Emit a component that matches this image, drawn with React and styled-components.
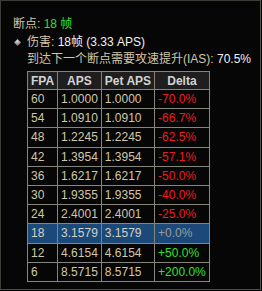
import React from "react";
import styled, { createGlobalStyle } from "styled-components";

const colors = {
  beige: "#d2c6a6",
  white: "#f0f0f0",
  green: "#2ee02e",
  red: "#ee1c1c",
  gray: "#9a9a9a",
  line: "#86857c",
};

const rows = [
  [60, "1.0000", "1.0000", "-70.0%"],
  [54, "1.0910", "1.0910", "-66.7%"],
  [48, "1.2245", "1.2245", "-62.5%"],
  [42, "1.3954", "1.3954", "-57.1%"],
  [36, "1.6217", "1.6217", "-50.0%"],
  [30, "1.9355", "1.9355", "-40.0%"],
  [24, "2.4001", "2.4001", "-25.0%"],
  [18, "3.1579", "3.1579", "+0.0%"],
  [12, "4.6154", "4.6154", "+50.0%"],
  [6, "8.5715", "8.5715", "+200.0%"],
];

const deltaColor = (d) =>
  d.startsWith("-") ? colors.red : d === "+0.0%" ? colors.gray : colors.green;

const App = () => {
  return (
    <>
      <GlobalStyle />
      <Panel>
        <Title>
          断点: <Green>18 帧</Green>
        </Title>
        <Details>
          <Marker />
          <Line>
            伤害: <White>18帧 (3.33 APS)</White>
          </Line>
          <Line>
            到达下一个断点需要攻速提升(IAS): <White>70.5%</White>
          </Line>
          <Table>
            <thead>
              <tr>
                <Th>FPA</Th>
                <Th>APS</Th>
                <Th>Pet APS</Th>
                <Th>Delta</Th>
              </tr>
            </thead>
            <tbody>
              {rows.map(([fpa, aps, pet, delta]) => (
                <Row key={fpa} active={fpa === 18}>
                  <Td>{fpa}</Td>
                  <Td>{aps}</Td>
                  <Td>{pet}</Td>
                  <Td color={deltaColor(delta)}>{delta}</Td>
                </Row>
              ))}
            </tbody>
          </Table>
        </Details>
      </Panel>
    </>
  );
};

export default App;

const GlobalStyle = createGlobalStyle`
  body {
    margin: 0;
    background: #000;
    font-family: "Liberation Sans", "Noto Sans CJK SC", sans-serif;
    font-size: 12px;
  }
`;

const Panel = styled.div`
  box-sizing: border-box;
  width: 261px;
  height: 290px;
  padding: 14px 0 0 12px;
  background: #060606;
  border: 1px solid #3e3d38;
  border-right-color: #55544c;
  border-bottom-color: #4c4b44;
  color: ${colors.beige};
`;

const Title = styled.div`
  line-height: 18px;
  margin-bottom: 1px;
`;

const Green = styled.span`
  color: ${colors.green};
`;

const White = styled.span`
  color: ${colors.white};
`;

const Details = styled.div`
  display: grid;
  grid-template-columns: 14px auto;
  justify-content: start;
  justify-items: start;
`;

const Marker = styled.span`
  width: 5px;
  height: 5px;
  margin: 6px 0 0 2px;
  transform: rotate(45deg);
  background: radial-gradient(circle at 30% 30%, #d8d8d8, #6a6a6a);
`;

const Line = styled.div`
  grid-column: 2;
  line-height: 17px;
  white-space: nowrap;
`;

const Table = styled.table`
  grid-column: 2;
  justify-self: start;
  margin-top: 3px;
  border-collapse: collapse;
  border: 1px solid ${colors.line};
`;

const Th = styled.th`
  height: 17px;
  padding: 0 3px;
  border: 1px solid ${colors.line};
  background: #1e1e1e;
  color: #d4d4d4;
  font-weight: bold;
  text-align: center;
`;

const Row = styled.tr`
  background: ${(props) => (props.active ? "#1b4a7a" : "transparent")};
  color: ${(props) => (props.active ? "#d4d0c4" : colors.beige)};
`;

const Td = styled.td`
  height: 18.2px;
  padding: 0 3px;
  border: 1px solid ${colors.line};
  color: ${(props) => props.color || "inherit"};
  text-align: left;
  white-space: nowrap;
`;
